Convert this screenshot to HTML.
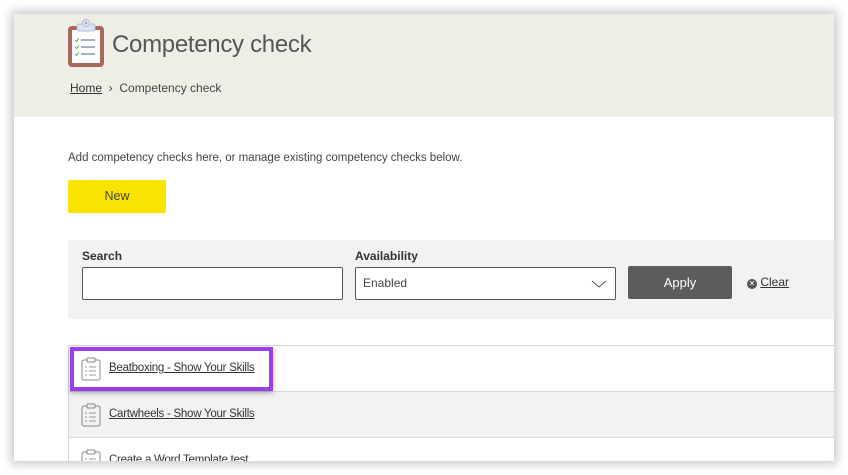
<!DOCTYPE html>
<html><head><meta charset="utf-8"><style>
*{margin:0;padding:0;box-sizing:border-box}
body{width:848px;height:475px;background:#fff;position:relative;overflow:hidden;font-family:"Liberation Sans",sans-serif;color:#333}
.page{position:absolute;left:14px;top:14px;width:820px;height:447px;background:#fff;overflow:hidden;box-shadow:0 0 10px 3px rgba(0,0,0,.22)}
.hdr{position:absolute;left:0;top:0;width:820px;height:103px;background:#efeee6}
.abs{position:absolute}
h1{position:absolute;left:98px;top:17px;font-size:24px;font-weight:normal;color:#555;letter-spacing:-.3px}
.bc{position:absolute;left:56px;top:67px;font-size:12px;color:#444}
.bc u{color:#333}
.intro{position:absolute;left:54px;top:138px;font-size:11.5px;color:#444}
.new{position:absolute;left:54px;top:166px;width:98px;height:33px;background:#f9e300;border-radius:2px;font-size:12.5px;color:#444;text-align:center;line-height:33px}
.filt{position:absolute;left:54px;top:226px;width:766px;height:79px;background:#f2f2f2}
.lbl{position:absolute;top:9px;font-size:12px;font-weight:bold;color:#333}
.inp{position:absolute;top:27px;height:33px;background:#fff;border:1px solid #555;border-radius:2px}
.apply{position:absolute;left:560px;top:26px;width:104px;height:33px;background:#5c5c5c;border-radius:2px;color:#fff;font-size:13px;text-align:center;line-height:33px}
.clear{position:absolute;left:679px;top:35px;font-size:12px;color:#333}
.row{position:absolute;left:54px;width:766px;height:46px;border-top:1px solid #d6d6d6;border-left:1px solid #d6d6d6}
.row span{position:absolute;left:40px;top:16px;font-size:11.5px;letter-spacing:-.25px;color:#333;text-decoration:underline}
.row svg{position:absolute;left:12px;top:11px}
.hl{position:absolute;left:56px;top:333px;width:203px;height:44px;border:4px solid #9b3ef0;box-shadow:0 2px 5px rgba(0,0,0,.3)}
</style></head><body>
<div class="page">
<div class="hdr"></div>
<svg class="abs" style="left:53px;top:4px" width="38" height="50" viewBox="0 0 38 50">
<rect x="1" y="8" width="36" height="41" rx="4" fill="#a8675c"/>
<rect x="5" y="12" width="28" height="33" fill="#fff"/>
<rect x="10" y="6" width="18" height="7" rx="2" fill="#dde2f0" stroke="#b8bfd6"/>
<circle cx="19" cy="5" r="3.5" fill="#dde2f0" stroke="#b8bfd6"/>
<circle cx="19" cy="5" r="1" fill="#8a93ad"/>
<g stroke="#6a7a9c" stroke-width="1.2"><line x1="14" y1="22" x2="28" y2="22"/><line x1="14" y1="29" x2="28" y2="29"/><line x1="14" y1="36" x2="28" y2="36"/></g>
<g stroke="#6ab04c" stroke-width="1" fill="none"><path d="M8 22l1.5 1.5 2.5-3"/><path d="M8 29l1.5 1.5 2.5-3"/><path d="M8 36l1.5 1.5 2.5-3"/></g>
</svg>
<h1>Competency check</h1>
<div class="bc"><u>Home</u> &nbsp;›&nbsp; Competency check</div>
<div class="intro">Add competency checks here, or manage existing competency checks below.</div>
<div class="new">New</div>
<div class="filt">
<div class="lbl" style="left:14px">Search</div>
<div class="inp" style="left:14px;width:261px"></div>
<div class="lbl" style="left:287px">Availability</div>
<div class="inp" style="left:287px;width:261px"><span style="position:absolute;left:7px;top:8px;font-size:12px;color:#444">Enabled</span>
<svg style="position:absolute;right:8px;top:11px" width="16" height="10"><path d="M1 2l7 6 7-6" stroke="#555" fill="none"/></svg></div>
<div class="apply">Apply</div>
<div class="clear"><span style="display:inline-block;width:10px;height:10px;border-radius:50%;background:#555;color:#fff;font-size:8px;line-height:10px;text-align:center;vertical-align:0">✕</span> <u>Clear</u></div>
</div>
<div class="row" style="top:331px;background:#fff"><svg width="20" height="24" viewBox="0 0 20 24"><rect x="1" y="3" width="18" height="20" rx="2" fill="none" stroke="#888"/><rect x="6" y="1" width="8" height="4" rx="1" fill="#fff" stroke="#888"/><g stroke="#999"><line x1="8" y1="10" x2="15" y2="10"/><line x1="8" y1="14" x2="15" y2="14"/><line x1="8" y1="18" x2="15" y2="18"/><line x1="4" y1="10" x2="6" y2="10"/><line x1="4" y1="14" x2="6" y2="14"/><line x1="4" y1="18" x2="6" y2="18"/></g></svg><span>Beatboxing - Show Your Skills</span></div>
<div class="row" style="top:377px;background:#f2f2f2"><svg width="20" height="24" viewBox="0 0 20 24"><rect x="1" y="3" width="18" height="20" rx="2" fill="none" stroke="#888"/><rect x="6" y="1" width="8" height="4" rx="1" fill="#f2f2f2" stroke="#888"/><g stroke="#999"><line x1="8" y1="10" x2="15" y2="10"/><line x1="8" y1="14" x2="15" y2="14"/><line x1="8" y1="18" x2="15" y2="18"/><line x1="4" y1="10" x2="6" y2="10"/><line x1="4" y1="14" x2="6" y2="14"/><line x1="4" y1="18" x2="6" y2="18"/></g></svg><span>Cartwheels - Show Your Skills</span></div>
<div class="row" style="top:423px;background:#fff"><svg width="20" height="24" viewBox="0 0 20 24"><rect x="1" y="3" width="18" height="20" rx="2" fill="none" stroke="#888"/><rect x="6" y="1" width="8" height="4" rx="1" fill="#fff" stroke="#888"/><g stroke="#999"><line x1="8" y1="10" x2="15" y2="10"/><line x1="8" y1="14" x2="15" y2="14"/><line x1="4" y1="10" x2="6" y2="10"/><line x1="4" y1="14" x2="6" y2="14"/></g></svg><span>Create a Word Template test</span></div>
<div class="hl"></div>
</div>
</body></html>
